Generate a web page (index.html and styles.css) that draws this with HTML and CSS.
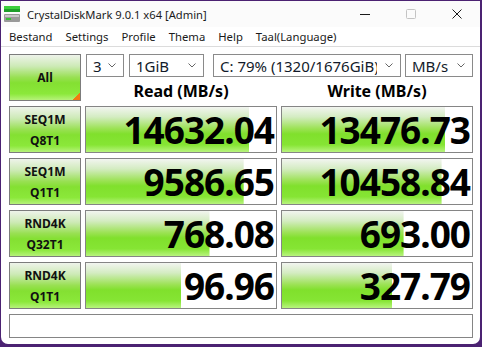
FILE: index.html
```html
<!DOCTYPE html>
<html lang="nl">
<head>
  <meta charset="UTF-8">
  <title>CrystalDiskMark 9.0.1 x64 [Admin]</title>
  <link rel="stylesheet" href="styles.css">
</head>
<body>
  <div class="window">
    <div class="titlebar">
      <svg class="app-icon" width="16" height="16" viewBox="0 0 16 16">
        <rect x="0" y="0" width="16" height="3" fill="#3ccf3c"/>
        <rect x="0" y="3" width="16" height="3" fill="#1e9e2a"/>
        <rect x="0" y="8" width="16" height="8" rx="1" fill="#9a9a9a"/>
        <rect x="1" y="9" width="14" height="2" fill="#c8c8c8"/>
        <rect x="2" y="12" width="5" height="2" fill="#36c236"/>
      </svg>
      <span class="title">CrystalDiskMark 9.0.1 x64 [Admin]</span>
      <div class="controls">
        <span class="ctl">
          <svg width="10" height="10" viewBox="0 0 10 10"><line x1="0" y1="5.5" x2="10" y2="5.5" stroke="#1a1a1a" stroke-width="1"/></svg>
        </span>
        <span class="ctl">
          <svg width="10" height="10" viewBox="0 0 10 10"><rect x="0.5" y="0.5" width="9" height="9" rx="1" fill="none" stroke="#c4c4c4" stroke-width="1"/></svg>
        </span>
        <span class="ctl">
          <svg width="10" height="10" viewBox="0 0 10 10"><path d="M0.5 0.5 L9.5 9.5 M9.5 0.5 L0.5 9.5" stroke="#1a1a1a" stroke-width="1"/></svg>
        </span>
      </div>
    </div>

    <nav class="menubar">
      <span>Bestand</span>
      <span>Settings</span>
      <span>Profile</span>
      <span>Thema</span>
      <span>Help</span>
      <span>Taal(Language)</span>
    </nav>

    <main class="board">
      <div class="btn all">All</div>
      <div class="top">
        <div class="selects">
          <div class="sel sel-count"><span class="sel-text">3</span><svg width="8" height="5" viewBox="0 0 8 5"><polyline points="0.5,0.5 4,4 7.5,0.5" fill="none" stroke="#666" stroke-width="1"/></svg></div>
          <div class="sel sel-size"><span class="sel-text">1GiB</span><svg width="8" height="5" viewBox="0 0 8 5"><polyline points="0.5,0.5 4,4 7.5,0.5" fill="none" stroke="#666" stroke-width="1"/></svg></div>
          <div class="sel sel-drive"><span class="sel-text">C: 79% (1320/1676GiB)</span><svg width="8" height="5" viewBox="0 0 8 5"><polyline points="0.5,0.5 4,4 7.5,0.5" fill="none" stroke="#666" stroke-width="1"/></svg></div>
          <div class="sel sel-unit"><span class="sel-text">MB/s</span><svg width="8" height="5" viewBox="0 0 8 5"><polyline points="0.5,0.5 4,4 7.5,0.5" fill="none" stroke="#666" stroke-width="1"/></svg></div>
        </div>
        <div class="heads">
          <div>Read (MB/s)</div>
          <div>Write (MB/s)</div>
        </div>
      </div>

      <div class="btn label">SEQ1M<br>Q8T1</div>
      <div class="meter" style="--fill: 86%"><span>14632.04</span></div>
      <div class="meter" style="--fill: 86%"><span>13476.73</span></div>

      <div class="btn label">SEQ1M<br>Q1T1</div>
      <div class="meter" style="--fill: 83%"><span>9586.65</span></div>
      <div class="meter" style="--fill: 84%"><span>10458.84</span></div>

      <div class="btn label">RND4K<br>Q32T1</div>
      <div class="meter" style="--fill: 65%"><span>768.08</span></div>
      <div class="meter" style="--fill: 64%"><span>693.00</span></div>

      <div class="btn label">RND4K<br>Q1T1</div>
      <div class="meter" style="--fill: 50%"><span>96.96</span></div>
      <div class="meter" style="--fill: 58%"><span>327.79</span></div>

      <div class="comment"></div>
    </main>
  </div>
</body>
</html>
```

FILE: styles.css
```css
:root {
  --frame: #4b2272;
  --cell-border: #858585;
  --text: #000000;
  --bar: linear-gradient(180deg, #f2f5f0 0%, #d4ecc2 22%, #9ce255 48%, #80e02c 60%, #86e534 84%, #b8f47e 100%);
  --btn: linear-gradient(180deg, #eef3ea 0%, #cdeab6 25%, #98e052 50%, #84e032 62%, #8be83a 86%, #b6f27a 100%);
}

* {
  box-sizing: border-box;
}

body {
  margin: 0;
  width: 482px;
  height: 347px;
  overflow: hidden;
  background-color: var(--frame);
  font-family: "Noto Sans", "Open Sans", sans-serif;
  color: var(--text);
}

.window {
  margin: 1px 0 0 1px;
  width: 479px;
  height: 343px;
  background-color: #ffffff;
  border-radius: 0 0 7px 7px;
  display: flex;
  flex-direction: column;
}

.titlebar {
  height: 26px;
  display: flex;
  align-items: center;
  padding-left: 3px;
  background-color: #fbfbfb;
}

.app-icon {
  flex: none;
}

.title {
  margin-left: 7px;
  font-size: 11.2px;
  color: #1a1a1a;
}

.controls {
  margin-left: auto;
  display: flex;
  height: 100%;
}

.ctl {
  width: 46px;
  display: flex;
  align-items: center;
  justify-content: center;
}

.menubar {
  height: 20px;
  display: flex;
  align-items: center;
  padding-left: 1.5px;
  font-size: 11.3px;
  color: #1a1a1a;
  background-color: #ffffff;
  border-bottom: 1px solid #dcdcdc;
}

.menubar span {
  padding: 0 6.5px;
}

.board {
  display: grid;
  grid-template-columns: 72px 192px 192px;
  grid-template-rows: 47px 47px 47px 47px 47px 24px;
  gap: 5px 4px;
  padding: 7px 0 0 8px;
}

.btn {
  border: 1px solid #7c7c7c;
  background: var(--btn);
  display: flex;
  align-items: center;
  justify-content: center;
  text-align: center;
  font-weight: 700;
  font-size: 12px;
  line-height: 21px;
  color: #111;
}

.all {
  background:
    linear-gradient(to top left, #f27a12 50%, transparent 50%) no-repeat right 0 bottom 0 / 8px 8px,
    var(--btn);
}

.top {
  grid-column: 2 / 4;
  display: flex;
  flex-direction: column;
}

.selects {
  height: 23px;
  display: flex;
}

.sel {
  height: 23px;
  border: 1px solid #8a8a8a;
  background-color: #ffffff;
  display: flex;
  align-items: center;
  padding: 0 7px 0 6px;
  font-size: 15px;
  color: #121a2a;
  overflow: hidden;
}

.sel-text {
  flex: 1;
  white-space: nowrap;
  overflow: hidden;
}

.sel svg {
  flex: none;
  margin-left: 4px;
}

.sel-count {
  width: 38px;
  margin-left: 1px;
}

.sel-size {
  width: 75px;
  margin-left: 5px;
}

.sel-drive {
  width: 188px;
  margin-left: 9px;
}

.sel-drive svg {
  margin-left: 8px;
}

.sel-unit {
  width: 68px;
  margin-left: 4px;
}

.heads {
  flex: 1;
  display: grid;
  grid-template-columns: 192px 192px;
  column-gap: 4px;
  align-items: end;
  text-align: center;
  font-weight: 700;
  font-size: 16px;
  line-height: 17px;
  padding-bottom: 1px;
}

.meter {
  border: 1px solid var(--cell-border);
  background: var(--bar) no-repeat 0 0 / var(--fill) 100%, #ffffff;
  display: flex;
  align-items: center;
  justify-content: flex-end;
  padding-right: 2px;
  font-weight: 700;
  font-size: 37px;
  letter-spacing: -1px;
  line-height: 1;
}

.comment {
  grid-column: 1 / -1;
  border: 1px solid var(--cell-border);
  background-color: #ffffff;
}
```
